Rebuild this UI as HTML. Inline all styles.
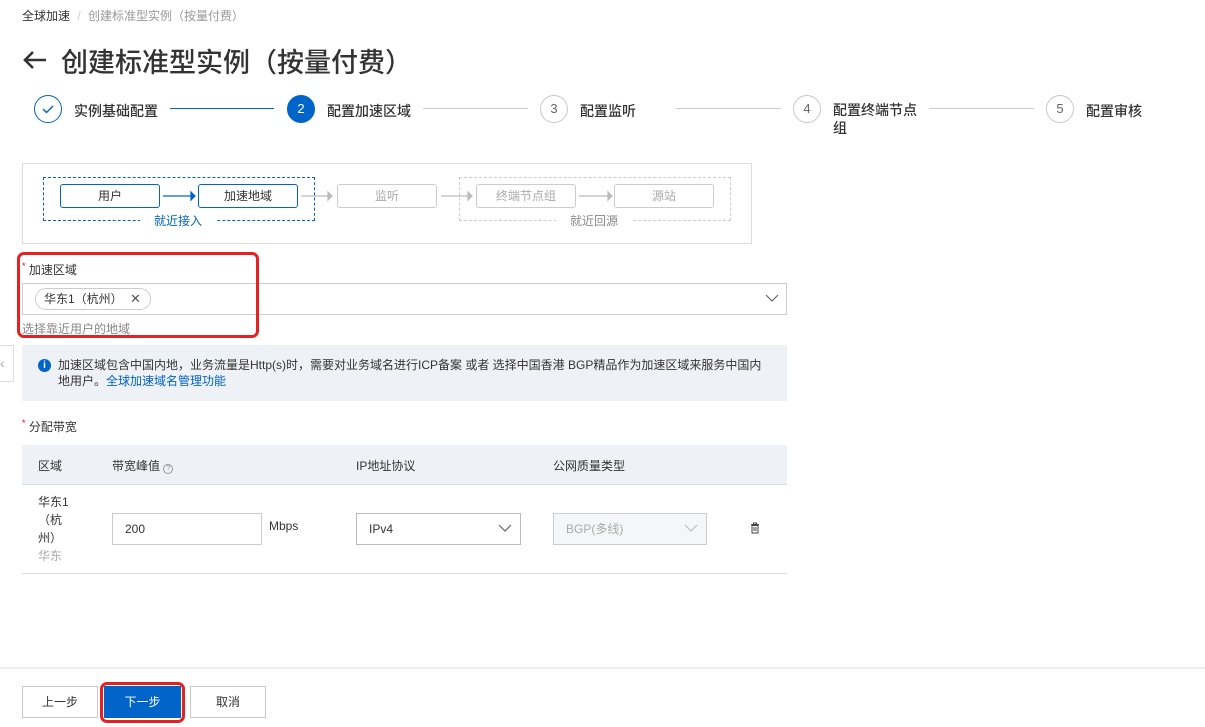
<!DOCTYPE html>
<html><head><meta charset="utf-8"><style>
*{margin:0;padding:0;box-sizing:border-box}
body{width:1205px;height:727px;position:relative;overflow:hidden;background:#fff;font-family:"Liberation Sans","Noto Sans CJK SC",sans-serif;color:#333;font-size:12px}
.a{position:absolute;white-space:nowrap}
.c{position:absolute;width:28px;height:28px;border-radius:50%;border:1px solid #c8c8c8;color:#666;text-align:center;line-height:26px;font-size:13px;top:95px;background:#fff}
.st{position:absolute;top:101px;font-size:14px;color:#333;font-weight:500}
.ln{position:absolute;top:108px;height:1px;background:#ccc}
.bx{position:absolute;top:184px;height:24px;border:1px solid #ccc;border-radius:3px;text-align:center;line-height:22px;color:#aaa;font-size:12px;width:100px;background:#fff}
.bx.b{border-color:#0064c8;color:#333}
.btn{position:absolute;top:686px;height:32px;border:1px solid #c8c8c8;text-align:center;line-height:30px;font-size:12px;background:#fff;color:#333}
</style></head><body>
<div class="a" style="left:22px;top:7px;color:#333">全球加速 <span style="color:#ccc;margin:0 4px">/</span> <span style="color:#999">创建标准型实例（按量付费）</span></div>
<svg class="a" style="left:22px;top:49px" width="26" height="22" viewBox="0 0 26 22"><path d="M24 11H3M11 3L3 11l8 8" fill="none" stroke="#333" stroke-width="2.6"/></svg>
<div class="a" style="left:61px;top:41px;font-size:27px;color:#333;font-weight:500">创建标准型实例（按量付费）</div>

<div class="c" style="left:34px;border-color:#0064c8"><svg width="14" height="14" viewBox="0 0 14 14" style="margin-top:6px"><path d="M2 7l3.5 3.5L12 4" fill="none" stroke="#0064c8" stroke-width="1.4"/></svg></div>
<div class="st" style="left:74px">实例基础配置</div>
<div class="ln" style="left:170px;width:104px;background:#0064c8"></div>
<div class="c" style="left:287px;background:#0064c8;border-color:#0064c8;color:#fff">2</div>
<div class="st" style="left:327px">配置加速区域</div>
<div class="ln" style="left:423px;width:105px"></div>
<div class="c" style="left:540px">3</div>
<div class="st" style="left:580px">配置监听</div>
<div class="ln" style="left:676px;width:105px"></div>
<div class="c" style="left:793px">4</div>
<div class="st" style="left:833px;white-space:normal;width:90px;line-height:18px;top:101px">配置终端节点组</div>
<div class="ln" style="left:929px;width:105px"></div>
<div class="c" style="left:1046px">5</div>
<div class="st" style="left:1086px">配置审核</div>

<div class="a" style="left:22px;top:163px;width:730px;height:81px;border:1px solid #ddd"></div>
<div class="a" style="left:43px;top:177px;width:272px;height:44px;border:1px dashed #0064c8"></div>
<div class="a" style="left:459px;top:177px;width:272px;height:44px;border:1px dashed #ccc"></div>
<div class="a" style="left:140px;top:212px;width:76px;height:16px;background:#fff;text-align:center;color:#0064c8">就近接入</div>
<div class="a" style="left:556px;top:212px;width:76px;height:16px;background:#fff;text-align:center;color:#888">就近回源</div>
<div class="bx b" style="left:60px">用户</div>
<div class="bx b" style="left:198px">加速地域</div>
<div class="bx" style="left:337px">监听</div>
<div class="bx" style="left:476px">终端节点组</div>
<div class="bx" style="left:614px">源站</div>
<svg class="a" style="left:160px;top:190px" width="560" height="12"><g fill="none" stroke-width="1.2"><path d="M3 6h32" stroke="#0064c8"/><path d="M31 2l4 4-4 4z" fill="#0064c8" stroke="#0064c8"/><g stroke="#bbb"><path d="M141 6h30M281 6h30M419 6h32"/></g><g fill="#bbb" stroke="#bbb"><path d="M168 2l4 4-4 4z"/><path d="M308 2l4 4-4 4z"/><path d="M448 2l4 4-4 4z"/></g></g></svg>

<div class="a" style="left:22px;top:261px;font-size:12px"><span style="color:#e00;font-size:9px;vertical-align:top">*</span> 加速区域</div>
<div class="a" style="left:22px;top:283px;width:765px;height:32px;border:1px solid #ccc"></div>
<div class="a" style="left:35px;top:288px;width:116px;height:22px;border:1px solid #ccc;border-radius:11px;padding-left:8px;line-height:20px">华东1（杭州）<span style="position:absolute;left:94px;color:#555;font-size:13px">✕</span></div>
<svg class="a" style="left:765px;top:293px" width="14" height="10"><path d="M1 2l6 6 6-6" fill="none" stroke="#666" stroke-width="1.2"/></svg>
<div class="a" style="left:22px;top:320px;color:#888">选择靠近用户的地域</div>
<div class="a" style="left:17px;top:252px;width:242px;height:86px;border:3px solid #e52222;border-radius:7px"></div>

<div class="a" style="left:0;top:345px;width:14px;height:37px;border:1px solid #ddd;border-left:none;background:#fff;color:#aaa;font-size:14px;line-height:34px">‹</div>
<div class="a" style="left:22px;top:345px;width:765px;height:56px;background:#eef1f6"></div>
<div class="a" style="left:38px;top:359px;width:13px;height:13px;border-radius:50%;background:#0064c8;color:#fff;font-size:10px;line-height:13px;text-align:center;font-weight:bold">i</div>
<div class="a" style="left:58px;top:357px;line-height:16px;color:#333">加速区域包含中国内地，业务流量是Http(s)时，需要对业务域名进行ICP备案 或者 选择中国香港 BGP精品作为加速区域来服务中国内<br>地用户。<span style="color:#0064c8">全球加速域名管理功能</span></div>

<div class="a" style="left:22px;top:418px"><span style="color:#e00;font-size:9px;vertical-align:top">*</span> 分配带宽</div>
<div class="a" style="left:22px;top:445px;width:765px;height:40px;background:#eef1f6;border-bottom:1px solid #ddd"></div>
<div class="a" style="left:38px;top:457px">区域</div>
<div class="a" style="left:112px;top:457px">带宽峰值 <span style="display:inline-block;width:10px;height:10px;border:1px solid #999;border-radius:50%;font-size:7px;line-height:8px;text-align:center;color:#999">?</span></div>
<div class="a" style="left:356px;top:457px">IP地址协议</div>
<div class="a" style="left:553px;top:457px">公网质量类型</div>
<div class="a" style="left:22px;top:573px;width:765px;height:1px;background:#ddd"></div>
<div class="a" style="left:38px;top:493px;line-height:18px">华东1<br>（杭<br>州）<br><span style="color:#aaa">华东</span></div>
<div class="a" style="left:112px;top:513px;width:150px;height:32px;border:1px solid #ccc;padding-left:12px;line-height:30px">200</div>
<div class="a" style="left:269px;top:519px">Mbps</div>
<div class="a" style="left:356px;top:513px;width:165px;height:32px;border:1px solid #bbb;padding-left:12px;line-height:30px">IPv4</div>
<svg class="a" style="left:498px;top:523px" width="14" height="10"><path d="M1 2l6 6 6-6" fill="none" stroke="#666" stroke-width="1.2"/></svg>
<div class="a" style="left:553px;top:513px;width:154px;height:32px;border:1px solid #ccc;background:#f5f6f7;padding-left:12px;line-height:30px;color:#aaa">BGP(多线)</div>
<svg class="a" style="left:684px;top:523px" width="14" height="10"><path d="M1 2l6 6 6-6" fill="none" stroke="#bbb" stroke-width="1.2"/></svg>
<svg class="a" style="left:750px;top:522px" width="10" height="12"><path d="M1 2.5h8M3.5 2.5V1h3v1.5M2 3.5h6v7.5H2z M4 5v4M6 5v4" fill="none" stroke="#444" stroke-width="1"/></svg>

<div class="a" style="left:0;top:667px;width:1205px;height:2px;background:#eee"></div>
<div class="btn" style="left:22px;width:76px">上一步</div>
<div class="btn" style="left:104px;width:77px;background:#0064c8;border-color:#0064c8;color:#fff">下一步</div>
<div class="a" style="left:100px;top:682px;width:85px;height:41px;border:3px solid #e52222;border-radius:7px"></div>
<div class="btn" style="left:190px;width:76px">取消</div>
</body></html>
